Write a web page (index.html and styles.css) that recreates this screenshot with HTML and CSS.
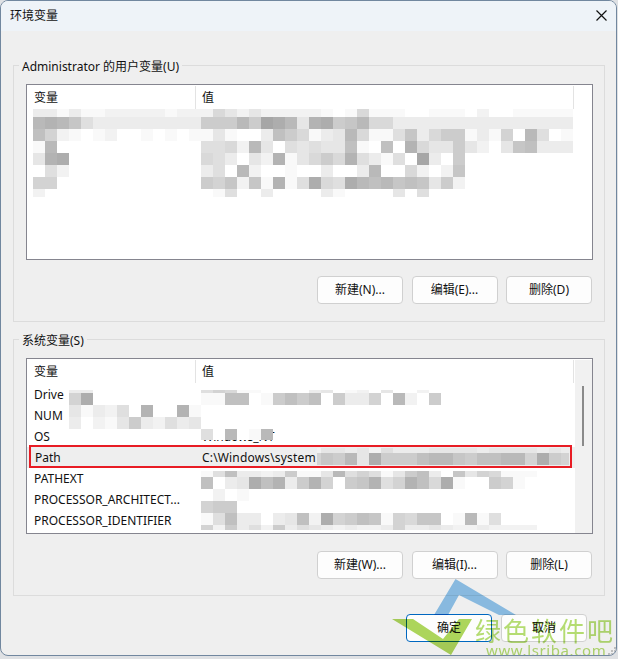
FILE: index.html
```html
<!DOCTYPE html>
<html lang="zh-CN">
<head>
    <meta charset="UTF-8">
    <title>环境变量</title>
    <link rel="stylesheet" href="styles.css">
</head>
<body>
    <div class="window">
        <div class="titlebar">
            <span>环境变量</span>
            <svg class="close" width="11" height="11" viewBox="0 0 11 11"><path d="M.5.5l10 10M10.5.5l-10 10"/></svg>
        </div>
        <div class="content">
            <div class="group">
                <span class="legend">Administrator 的用户变量(U)</span>
                <div class="list">
                    <div class="list-head">
                        <span class="col-name">变量</span>
                        <span class="col-value">值</span>
                    </div>
                </div>
                <div class="actions">
                    <button type="button">新建(N)...</button>
                    <button type="button">编辑(E)...</button>
                    <button type="button">删除(D)</button>
                </div>
            </div>

            <div class="group second">
                <span class="legend">系统变量(S)</span>
                <div class="list">
                    <div class="list-head">
                        <span class="col-name">变量</span>
                        <span class="col-value">值</span>
                    </div>
                    <div class="rows">
                        <div class="row"><span class="col-name">Drive</span><span class="col-value"></span></div>
                        <div class="row"><span class="col-name">NUM</span><span class="col-value"></span></div>
                        <div class="row"><span class="col-name">OS</span><span class="col-value">Windows_NT</span></div>
                        <div class="row selected"><span class="col-name">Path</span><span class="col-value">C:\Windows\system</span></div>
                        <div class="row"><span class="col-name">PATHEXT</span><span class="col-value"></span></div>
                        <div class="row"><span class="col-name">PROCESSOR_ARCHITECT...</span><span class="col-value"></span></div>
                        <div class="row"><span class="col-name">PROCESSOR_IDENTIFIER</span><span class="col-value"></span></div>
                    </div>
                    <div class="scrollbar"><div class="thumb"></div></div>
                </div>
                <div class="actions">
                    <button type="button">新建(W)...</button>
                    <button type="button">编辑(I)...</button>
                    <button type="button">删除(L)</button>
                </div>
            </div>

            <div class="footer">
                <button type="button" class="primary">确定</button>
                <button type="button">取消</button>
            </div>
        </div>

        <!-- blurred values, painted by mosaic.js -->
        <canvas id="mosaic" width="618" height="659"></canvas>

        <!-- site watermark -->
        <div class="watermark">
            <svg width="618" height="659" viewBox="0 0 618 659">
                <path class="wm-blue" d="M455.5 579L434 615h14l11-20 40 20h17z"/>
                <path class="wm-green" d="M392 619h21l30 20 16-20h13l-21 36z"/>
            </svg>
            <span class="wm-name">绿色软件吧</span>
            <span class="wm-url">www.lsrjba.com</span>
        </div>

        <svg class="grip" width="8" height="8" viewBox="0 0 8 8">
            <path d="M6 0h2v2H6zM3 3h2v2H3zM6 3h2v2H6zM0 6h2v2H0zM3 6h2v2H3zM6 6h2v2H6z"/>
        </svg>
    </div>
    <script src="mosaic.js"></script>
</body>
</html>
```

FILE: styles.css
```css
* {
    box-sizing: border-box;
}
body {
    margin: 0;
    width: 618px;
    height: 659px;
    overflow: hidden;
    background-color: #dfe1e4;
    font-family: "Noto Sans", "Noto Sans CJK SC", sans-serif;
    font-size: 12px;
    color: #111;
}
.window {
    position: relative;
    width: 617px;
    height: 656px;
    background-color: #efefef;
    border: 1px solid #71879f;
    border-radius: 8px;
    overflow: hidden;
}
.titlebar {
    display: flex;
    align-items: center;
    justify-content: space-between;
    height: 30px;
    padding: 0 9px 2px 9px;
    background-color: #eef3f8;
}
.close path {
    stroke: #111;
    stroke-width: 1.2;
    fill: none;
}
.content {
    padding: 34px 11px 0 12px;
}
.group {
    position: relative;
    height: 257px;
    padding: 18px 11px 0 12px;
    border: 1px solid #dcdcdc;
}
.second {
    margin-top: 17px;
}
.legend {
    position: absolute;
    top: -8px;
    left: 5px;
    padding: 0 3px;
    line-height: 17px;
    background-color: #efefef;
}

/* list views */
.list {
    position: relative;
    height: 176px;
    background-color: #fff;
    border: 1px solid #85858f;
}
.list-head {
    display: flex;
    height: 23px;
    margin-top: 1px;
    line-height: 24px;
}
.col-name {
    flex: none;
    width: 169px;
    padding-left: 7px;
    white-space: nowrap;
}
.col-value {
    flex: none;
    width: 378px;
    padding-left: 6px;
    white-space: nowrap;
    overflow: hidden;
}
.list-head span {
    border-right: 1px solid #e3e3e3;
}
.rows {
    margin-top: 1px;
    width: 548px;
}
.row {
    display: flex;
    height: 21px;
    line-height: 21px;
}
.selected {
    position: relative;
    background-color: #eeeeee;
}
.selected .col-name {
    padding-left: 8px;
}
.selected .col-value {
    letter-spacing: 0.17px;
}
.selected::after {
    content: "";
    position: absolute;
    top: -2px;
    left: 2px;
    box-sizing: border-box;
    width: 543px;
    height: 23px;
    border: 2px solid #e81c24;
}
.scrollbar {
    position: absolute;
    top: 1px;
    right: 0;
    bottom: 0;
    width: 17px;
    background-color: #f1f1f1;
}
.thumb {
    width: 2px;
    height: 60px;
    margin: 26px 0 0 7px;
    background-color: #8a8a8a;
}

/* buttons */
.actions {
    display: flex;
    justify-content: flex-end;
    gap: 8.5px;
    margin-top: 16px;
    padding-right: 1px;
}
.second .actions {
    margin-top: 17px;
}
button {
    width: 86px;
    height: 28px;
    padding: 0 0 2px;
    background-color: #fdfdfd;
    border: 1px solid #d0d0d0;
    border-radius: 4px;
    font-family: inherit;
    font-size: 12px;
    color: #111;
}
.footer {
    display: flex;
    justify-content: flex-end;
    gap: 9px;
    margin-top: 18px;
    padding-right: 18px;
}
.primary {
    border-color: #0067c0;
}

#mosaic {
    position: absolute;
    top: -1px;
    left: -1px;
}
.watermark {
    position: absolute;
    top: -1px;
    left: -1px;
    width: 618px;
    height: 659px;
    mix-blend-mode: multiply;
}
.wm-blue {
    fill: #91c6ee;
}
.wm-green {
    fill: #aed75c;
}
.wm-name {
    position: absolute;
    top: 612px;
    left: 475px;
    font-family: "Noto Sans CJK SC", sans-serif;
    font-size: 26px;
    line-height: 36px;
    letter-spacing: 2px;
    color: #b6de72;
    white-space: nowrap;
}
.wm-url {
    position: absolute;
    top: 641px;
    left: 486px;
    font-size: 15px;
    line-height: 18px;
    letter-spacing: 0.6px;
    color: #b6de72;
    white-space: nowrap;
}
.grip {
    position: absolute;
    right: 0;
    bottom: 0;
    fill: #bdbdbd;
}
```

FILE: mosaic.js
```js
// each row: x, y, height, cell width, shades (0 dark .. f white, "." leaves the page showing)
var mosaicRows = [
    // user variables
    [33, 109, 8, 12, "ccecee" + "dddddedd" + "d9bdbdddd" + "defe9eeeffeeefdffeeeee" + "f"],
    [33, 117, 12, 12, "4346accccccccc" + "77747124b" + "3276499ccccccccccccccc"],
    [33, 129, 12, 12, "58defedffefefe" + "ebeffc579" + "ecb49eea6c977ece8f4afe"],
    [33, 141, 12, 12, "e4ffffffffffff" + "aa9d4bfab" + "abb5ef5f39bb7bdfb65ccc"],
    [33, 153, 12, 12, "b32fffffffffff" + "9acfbd3eb" + "9793aceaf1cf7fffffffff"],
    [33, 165, 12, 12, "fadfffffffffff" + "caf4dffef" + "fcffc4ff9dfd6fffffffff"],
    [33, 177, 12, 12, "88ffffffffffff" + "786d6e3ea" + "29a2454656b7dfffffffff"],
    [33, 189, 8, 12, "dfffffffffffff" + "feaffcfff" + "fceffffbfaffffffffffff"],

    // system variables, left column
    [69, 390, 3, 12, "cc"],
    [69, 393, 12, 12, "82"],
    [69, 405, 12, 12, "becdaf3ff3e"],
    [69, 417, 12, 12, "cfdeb7cdacb"],

    // system variables, right column
    [201, 390, 3, 12, "a89ee....cb.ed.b..d"],
    [201, 393, 12, 12, "ee55fe7575f7cc8f4df7f"],
    [201, 429, 11, 12, "af4fe4"],
    [317, 448, 5, 4, "d"],
    [321, 448, 5, 12, "bbcbdacccbbbbcbbbbcb"],
    [561, 448, 5, 8, "c"],
    [317, 453, 12, 4, "8"],
    [321, 453, 12, 12, "674b2777544675544827"],
    [561, 453, 12, 8, "8"],
    [201, 471, 6, 12, "ea5ccdc7e" + "eb4a8aeb75cf6b89eee"],
    [201, 477, 12, 12, "5fcb253c7" + "38f763a83592eff78ef"],
    [201, 489, 12, 12, "fdfe"],
    [201, 501, 12, 12, "877f"],
    [201, 513, 12, 12, "ea5ccfcb5" + "d28756e8966fe4ea"],
    [201, 525, 5, 12, "8d7cad7ca" + "bcdcddc8ccbcddcdddd"]
];

var ctx = document.getElementById("mosaic").getContext("2d");
mosaicRows.forEach(function (row) {
    row[4].split("").forEach(function (shade, i) {
        if (shade !== ".") {
            var g = Math.round(160 + parseInt(shade, 16) * 6.33);
            ctx.fillStyle = "rgb(" + g + "," + g + "," + g + ")";
            ctx.fillRect(row[0] + i * row[3], row[1], row[3], row[2]);
        }
    });
});
```
